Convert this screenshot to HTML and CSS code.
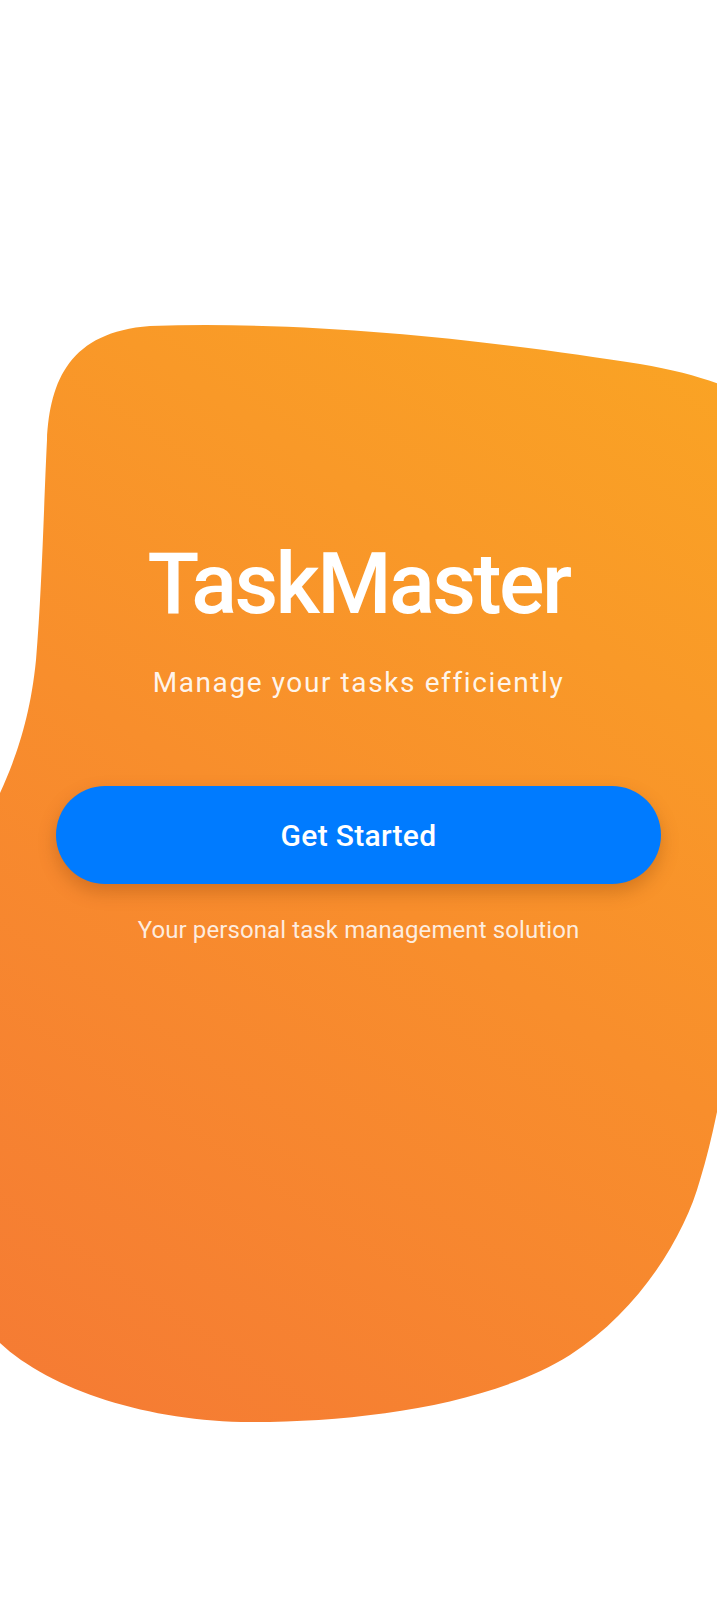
FILE: index.html
```html
<!DOCTYPE html>
<html lang="en">
<head>
<meta charset="utf-8">
<title>TaskMaster</title>
<link rel="stylesheet" href="styles.css">
</head>
<body>
<div class="screen">
  <svg class="blob" width="717" height="1600" viewBox="0 0 717 1600" aria-hidden="true">
    <defs>
      <linearGradient id="blobGrad" gradientUnits="userSpaceOnUse" x1="717" y1="340" x2="0" y2="1420">
        <stop offset="0" stop-color="#FAA424"/>
        <stop offset="0.5" stop-color="#F88E2C"/>
        <stop offset="1" stop-color="#F57A34"/>
      </linearGradient>
    </defs>
    <path fill="url(#blobGrad)" d="M 150 326 C 330 320, 520 345, 640 364 C 700 374, 740 390, 760 405 L 760 900 C 735 1000, 722 1110, 700 1180 C 685 1235, 640 1310, 570 1355 C 490 1405, 360 1422, 251 1422 C 150 1422, 50 1390, 0 1343 C -30 1300, -40 1200, -40 1000 C -40 880, -15 820, 0 793 C 15 760, 30 720, 36 660 C 42 590, 44 500, 47 440 C 50 380, 70 332, 150 326 Z"/>
  </svg>
  <main class="content">
    <h1 class="title">TaskMaster</h1>
    <p class="subtitle">Manage your tasks efficiently</p>
    <button class="cta" type="button">Get Started</button>
    <p class="tagline">Your personal task management solution</p>
  </main>
</div>
</body>
</html>
```
FILE: styles.css
```css
html, body {
  margin: 0;
  padding: 0;
  background: #ffffff;
}

.screen {
  position: relative;
  width: 717px;
  height: 1600px;
  overflow: hidden;
  background: #ffffff;
  font-family: Roboto, "Noto Sans", sans-serif;
}

.blob {
  position: absolute;
  left: 0;
  top: 0;
  z-index: 0;
}

.content {
  position: relative;
  z-index: 1;
  display: flex;
  flex-direction: column;
  align-items: center;
  padding: 534px 56px 0;
}

.title {
  margin: 0;
  font-size: 85px;
  line-height: 100px;
  font-weight: 500;
  letter-spacing: -2.6px;
  color: #ffffff;
}

.subtitle {
  margin: 29px 0 0;
  font-size: 28px;
  line-height: 40px;
  font-weight: 400;
  letter-spacing: 1.6px;
  color: rgba(255, 255, 255, 0.92);
}

.cta {
  margin-top: 83px;
  width: 100%;
  height: 98px;
  border: none;
  border-radius: 49px;
  background: #007BFF;
  color: #ffffff;
  font-family: inherit;
  font-size: 30px;
  font-weight: 500;
  letter-spacing: 0.3px;
  box-shadow: 0 8px 18px rgba(120, 50, 0, 0.28);
}

.tagline {
  margin: 30px 0 0;
  font-size: 24px;
  line-height: 32px;
  letter-spacing: 0.1px;
  color: rgba(255, 255, 255, 0.85);
}
```
